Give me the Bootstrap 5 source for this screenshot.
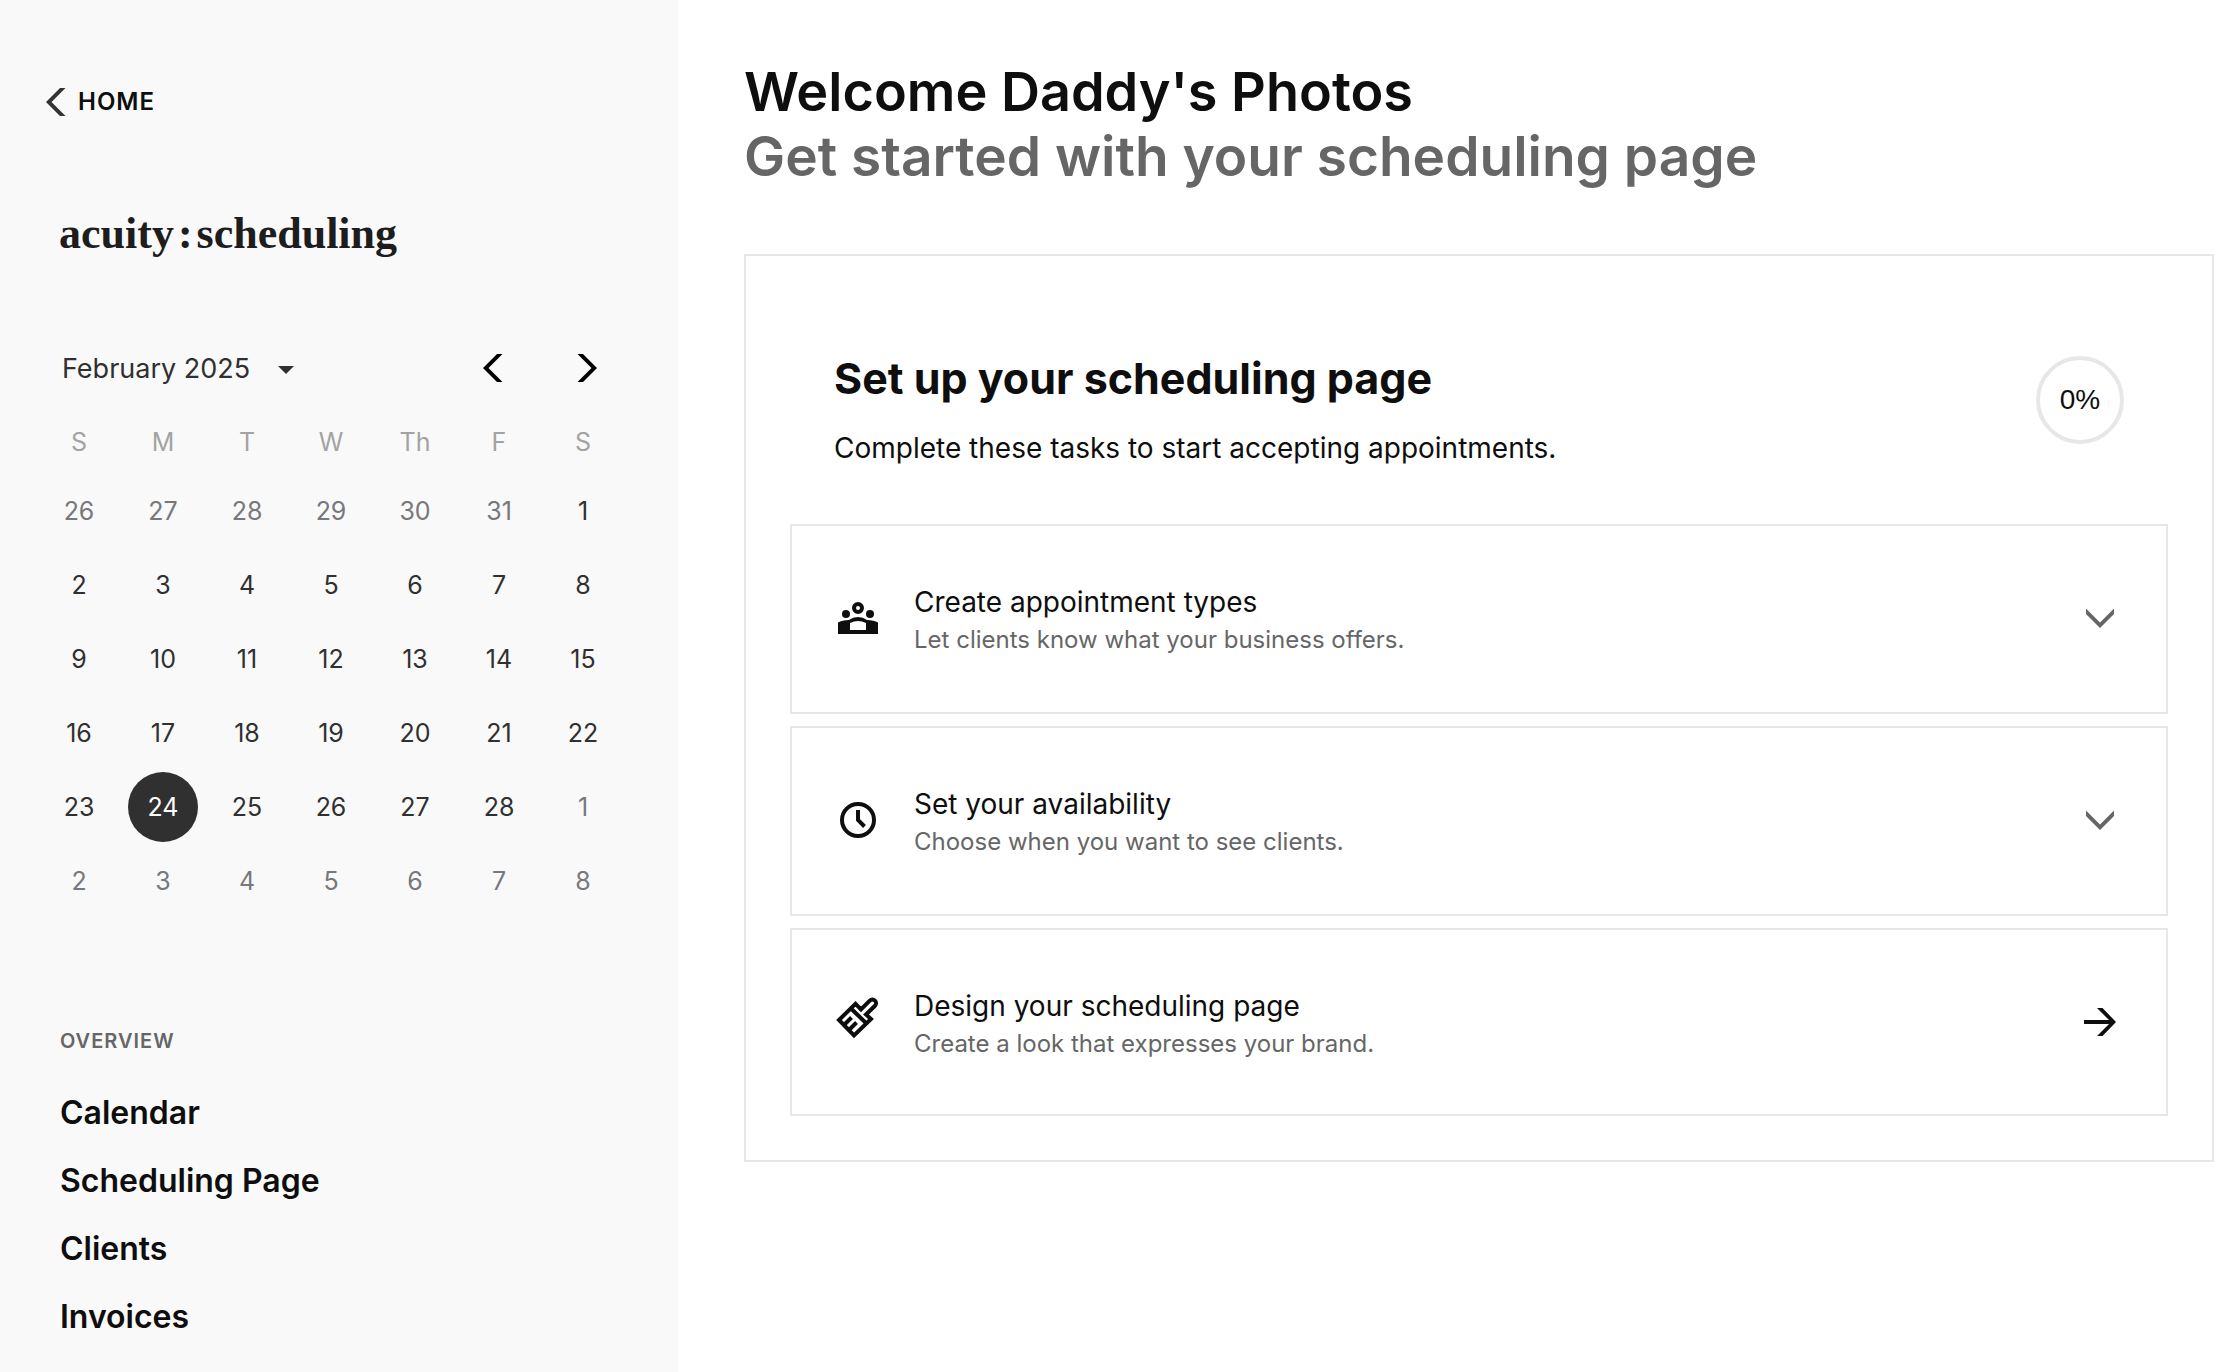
<!DOCTYPE html>
<html lang="en">
<head>
<meta charset="utf-8">
<meta name="viewport" content="width=device-width, initial-scale=1">
<title>Acuity Scheduling</title>
<link href="https://cdn.jsdelivr.net/npm/bootstrap@5.3.0/dist/css/bootstrap.min.css" rel="stylesheet">
<style>
  body { font-family: Inter, "Liberation Sans", sans-serif; color: #0e0e0e; background: #fff; }
  a, a:hover { color: inherit; text-decoration: none; }
  .plain-btn { background: none; border: 0; padding: 0; color: inherit; }
  svg { display: block; overflow: visible; fill: currentColor; }

  .side-panel { width: 678px; background: #f9f9f9; padding: 82px 37px 20px; }
  .home-link { height: 40px; margin-left: 9px; gap: 12px; font-size: 24px; font-weight: 600; letter-spacing: 1px; }
  .home-link svg { color: #333; }
  .brand-logo { margin: 86px 0 66px 22px; font: 700 44px/52px "Liberation Serif", serif; color: #1d1d1d; }
  .brand-colon { margin: 0 4px; }

  .month-cal { width: 588px; }
  .month-bar { height: 84px; padding: 0 14px 0 25px; }
  .month-pick { font-size: 27px; line-height: 40px; gap: 28px; padding-top: 2px; color: #303030; }
  .month-steps { gap: 46px; color: #000; }
  .month-steps button { width: 48px; height: 48px; }
  .day-grid { table-layout: fixed; width: 100%; font-size: 25px; color: #303030; text-align: center; }
  .day-grid th { height: 64px; padding: 2px 0 0; font-weight: 400; color: #a3a3a3; }
  .day-grid td { height: 74px; padding: 0; }
  .day-grid button { width: 70px; height: 70px; border-radius: 50%; line-height: 70px; vertical-align: top; }
  .day-grid .other-month { color: #76787c; }
  .day-grid .this-month { color: #303030; }
  .day-grid .today { background: #303030; color: #fff; }

  .side-nav { margin: 109px 0 0 23px; }
  .side-nav h2 { font-size: 20px; line-height: 28px; font-weight: 600; letter-spacing: 1px; color: #666; margin-bottom: 24px; }
  .side-nav a { font-size: 32px; line-height: 68px; font-weight: 600; display: block; }

  .main-area { padding: 60px 8px 40px 66px; min-width: 0; }
  .welcome-title { font-size: 54px; line-height: 64px; font-weight: 600; margin: 0; }
  .welcome-sub { font-size: 55px; line-height: 64px; font-weight: 600; color: #666; margin-bottom: 66px; }
  .setup-panel { border: 2px solid #e7e7e7; padding: 96px 44px 44px; }
  .setup-head { padding: 0 44px; margin-bottom: 56px; }
  .setup-head h2 { font-size: 43px; line-height: 52px; font-weight: 700; margin-bottom: 24px; }
  .setup-head p { font-size: 28px; line-height: 40px; margin: 0; }
  .percent-ring { width: 88px; height: 88px; border: 4px solid #e7e7e7; border-radius: 50%; font: 28px "Liberation Sans", sans-serif; }
  .task-list { gap: 12px; }
  .task-box { border: 2px solid #e7e7e7; padding: 55px 42px; gap: 32px; width: 100%; text-align: left; }
  .task-box:last-child { padding-bottom: 53px; }
  .task-title { font-size: 28px; line-height: 42px; }
  .task-note { font-size: 24px; line-height: 34px; color: #666; }
  .chev-down { color: #666; }
</style>
<script src="https://cdn.jsdelivr.net/npm/bootstrap@5.3.0/dist/js/bootstrap.bundle.min.js"></script>
</head>
<body>
<div class="d-flex min-vh-100">
  <aside class="side-panel flex-shrink-0">
    <a href="#" class="home-link d-flex align-items-center">
      <svg width="20" height="28" viewBox="0 0 20 28" aria-hidden="true"><path d="M14 0H19.500L5.500 14L19.500 28H14L0 14Z"/></svg>
      HOME
    </a>
    <div class="brand-logo d-flex"><span>acuity</span><span class="brand-colon">:</span><span>scheduling</span></div>

    <section class="month-cal" aria-label="Calendar">
      <div class="month-bar d-flex align-items-center justify-content-between">
        <button type="button" class="plain-btn month-pick d-flex align-items-center">
          February 2025
          <svg width="16" height="8" viewBox="0 0 16 8" aria-hidden="true"><path d="M0 1H16L8 9Z"/></svg>
        </button>
        <div class="month-steps d-flex">
          <button type="button" class="plain-btn d-flex align-items-center justify-content-center" aria-label="Previous month">
            <svg width="20" height="28" viewBox="0 0 20 28"><path d="M14 0H19.500L5.500 14L19.500 28H14L0 14Z"/></svg>
          </button>
          <button type="button" class="plain-btn d-flex align-items-center justify-content-center" aria-label="Next month">
            <svg width="20" height="28" viewBox="0 0 20 28"><path d="M6 0H.5L14.500 14L.5 28H6L20 14Z"/></svg>
          </button>
        </div>
      </div>
      <table class="day-grid">
        <thead><tr><th>S</th><th>M</th><th>T</th><th>W</th><th>Th</th><th>F</th><th>S</th></tr></thead>
        <tbody>
          <tr class="other-month"><td><button class="plain-btn">26</button></td><td><button class="plain-btn">27</button></td><td><button class="plain-btn">28</button></td><td><button class="plain-btn">29</button></td><td><button class="plain-btn">30</button></td><td><button class="plain-btn">31</button></td><td class="this-month"><button class="plain-btn">1</button></td></tr>
          <tr><td><button class="plain-btn">2</button></td><td><button class="plain-btn">3</button></td><td><button class="plain-btn">4</button></td><td><button class="plain-btn">5</button></td><td><button class="plain-btn">6</button></td><td><button class="plain-btn">7</button></td><td><button class="plain-btn">8</button></td></tr>
          <tr><td><button class="plain-btn">9</button></td><td><button class="plain-btn">10</button></td><td><button class="plain-btn">11</button></td><td><button class="plain-btn">12</button></td><td><button class="plain-btn">13</button></td><td><button class="plain-btn">14</button></td><td><button class="plain-btn">15</button></td></tr>
          <tr><td><button class="plain-btn">16</button></td><td><button class="plain-btn">17</button></td><td><button class="plain-btn">18</button></td><td><button class="plain-btn">19</button></td><td><button class="plain-btn">20</button></td><td><button class="plain-btn">21</button></td><td><button class="plain-btn">22</button></td></tr>
          <tr><td><button class="plain-btn">23</button></td><td><button class="plain-btn today" aria-current="date">24</button></td><td><button class="plain-btn">25</button></td><td><button class="plain-btn">26</button></td><td><button class="plain-btn">27</button></td><td><button class="plain-btn">28</button></td><td class="other-month"><button class="plain-btn">1</button></td></tr>
          <tr class="other-month"><td><button class="plain-btn">2</button></td><td><button class="plain-btn">3</button></td><td><button class="plain-btn">4</button></td><td><button class="plain-btn">5</button></td><td><button class="plain-btn">6</button></td><td><button class="plain-btn">7</button></td><td><button class="plain-btn">8</button></td></tr>
        </tbody>
      </table>
    </section>

    <nav class="side-nav" aria-label="Overview">
      <h2>OVERVIEW</h2>
      <a href="#">Calendar</a>
      <a href="#">Scheduling Page</a>
      <a href="#">Clients</a>
      <a href="#">Invoices</a>
    </nav>
  </aside>

  <main class="main-area flex-grow-1">
    <h1 class="welcome-title">Welcome Daddy's Photos</h1>
    <p class="welcome-sub">Get started with your scheduling page</p>

    <section class="setup-panel">
      <header class="setup-head d-flex justify-content-between align-items-start">
        <div>
          <h2>Set up your scheduling page</h2>
          <p>Complete these tasks to start accepting appointments.</p>
        </div>
        <div class="percent-ring mt-1 flex-shrink-0 d-flex align-items-center justify-content-center">0%</div>
      </header>

      <div class="task-list d-flex flex-column">
        <button type="button" class="plain-btn task-box d-flex align-items-center">
          <svg width="48" height="48" viewBox="0 0 48 48" aria-hidden="true">
            <circle cx="24" cy="13" r="4" fill="none" stroke="currentColor" stroke-width="4"/>
            <circle cx="12" cy="19" r="4"/><circle cx="36" cy="19" r="4"/>
            <path fill-rule="evenodd" d="M4 39V27.500Q8 25 15 25Q19 22 24 22T33 25Q40 25 44 27.500V39ZM16 35H32V28Q28 26 24 26T16 28Z"/>
          </svg>
          <span class="flex-grow-1"><span class="task-title d-block">Create appointment types</span><span class="task-note d-block">Let clients know what your business offers.</span></span>
          <svg class="chev-down" width="48" height="48" viewBox="0 0 48 48" aria-hidden="true"><path d="M10 13.500L24 27.500L38 13.500V19L24 33L10 19Z"/></svg>
        </button>

        <button type="button" class="plain-btn task-box d-flex align-items-center">
          <svg width="48" height="48" viewBox="0 0 48 48" aria-hidden="true">
            <g fill="none" stroke="currentColor" stroke-width="4"><circle cx="24" cy="23" r="16"/><path d="M24 13V23L30.500 29.500"/></g>
          </svg>
          <span class="flex-grow-1"><span class="task-title d-block">Set your availability</span><span class="task-note d-block">Choose when you want to see clients.</span></span>
          <svg class="chev-down" width="48" height="48" viewBox="0 0 48 48" aria-hidden="true"><path d="M10 13.500L24 27.500L38 13.500V19L24 33L10 19Z"/></svg>
        </button>

        <a href="#" class="task-box d-flex align-items-center">
          <svg width="48" height="48" viewBox="0 0 48 48" aria-hidden="true">
            <g fill="none" stroke="currentColor" stroke-width="4">
              <path d="M5 21L21.500 4.800L27 10.500L35.800 1.700A3.600 3.600 0 0 1 41 6.800L32 15.500L37 20L20 36.500Z"/>
              <path d="M16.500 9L33 25M10 26L17.500 18.500M15 31L22.500 23.500" />
            </g>
          </svg>
          <span class="flex-grow-1"><span class="task-title d-block">Design your scheduling page</span><span class="task-note d-block">Create a look that expresses your brand.</span></span>
          <svg width="48" height="48" viewBox="0 0 48 48" aria-hidden="true"><path d="M8 21H33L21 9H26.500L40 23L26.500 37H21L33 25H8Z"/></svg>
        </a>
      </div>
    </section>
  </main>
</div>
</body>
</html>
